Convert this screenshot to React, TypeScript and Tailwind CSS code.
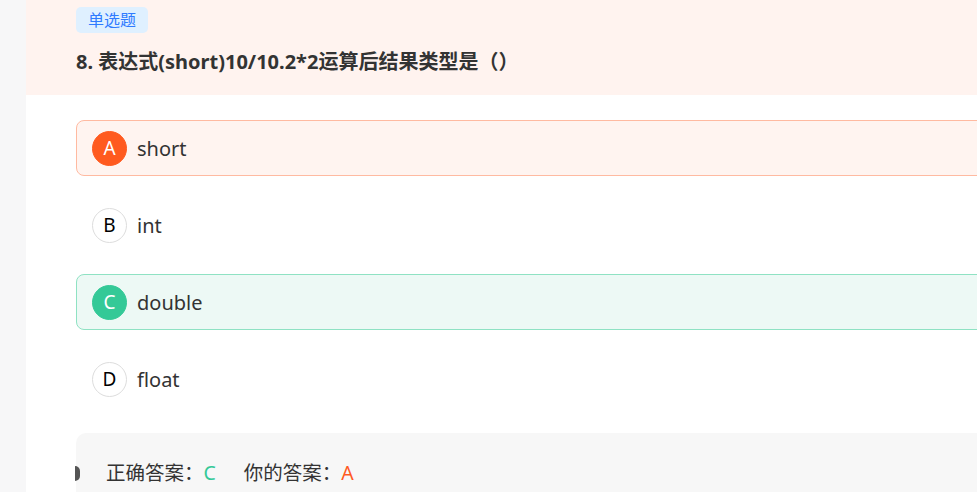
import React from "react";

const font = { fontFamily: '"Noto Sans", "Noto Sans CJK SC", sans-serif' };

type Opt = { k: string; t: string; state: "wrong" | "right" | "none" };
const opts: Opt[] = [
  { k: "A", t: "short", state: "wrong" },
  { k: "B", t: "int", state: "none" },
  { k: "C", t: "double", state: "right" },
  { k: "D", t: "float", state: "none" },
];

export default function App() {
  return (
    <div className="w-[977px] h-[492px] overflow-hidden flex bg-white text-[#333]" style={font}>
      <div className="w-[26px] shrink-0 bg-[#f7f7f8]" />
      <div className="flex-1 min-w-0">
        <div className="h-[95px] bg-[#fff3ef] pl-[50px] pt-[7px]">
          <span className="inline-flex items-center h-[26px] px-[12px] rounded-[5px] bg-[#dff0ff] text-[#2f7bff] text-[16px]">
            单选题
          </span>
          <div className="mt-[15px] text-[20px] font-bold leading-[28px] text-[#333]">
            8. 表达式(short)10/10.2*2运算后结果类型是（）
          </div>
        </div>
        <div className="pl-[50px] pt-[25px] w-[1000px] flex flex-col">
          {opts.map((o) => {
            const box =
              o.state === "wrong"
                ? "border-[#ffbaa1] bg-[#fff4f0]"
                : o.state === "right"
                ? "border-[#8fe2c3] bg-[#edf9f5]"
                : "border-transparent bg-white";
            const circ =
              o.state === "wrong"
                ? "bg-[#ff5a1f] text-white border-[#ff5a1f]"
                : o.state === "right"
                ? "bg-[#34c997] text-white border-[#34c997]"
                : "bg-white text-black border-[#dddddd]";
            return (
              <div
                key={o.k}
                className={`h-[56px] mb-[21px] flex items-center pl-[15px] border rounded-[8px] ${box}`}
              >
                <div
                  className={`w-[35px] h-[35px] rounded-full border flex items-center justify-center text-[19px] ${circ}`}
                >
                  {o.k}
                </div>
                <span className="ml-[10px] text-[20px] leading-[28px] pt-[2px]">{o.t}</span>
              </div>
            );
          })}
          <div className="relative mt-[5px] h-[80px] rounded-tl-[10px] bg-[#f7f7f7] pl-[30px] pt-[26px] text-[19.5px] leading-[28px]">
            <span className="absolute left-[-1px] top-[33px] w-[5px] h-[15px] rounded-r-full bg-[#555]" />
            <span>正确答案：</span>
            <span className="text-[#34c997]">C</span>
            <span className="ml-[28px]">你的答案：</span>
            <span className="text-[#ff5a1f]">A</span>
          </div>
        </div>
      </div>
    </div>
  );
}
